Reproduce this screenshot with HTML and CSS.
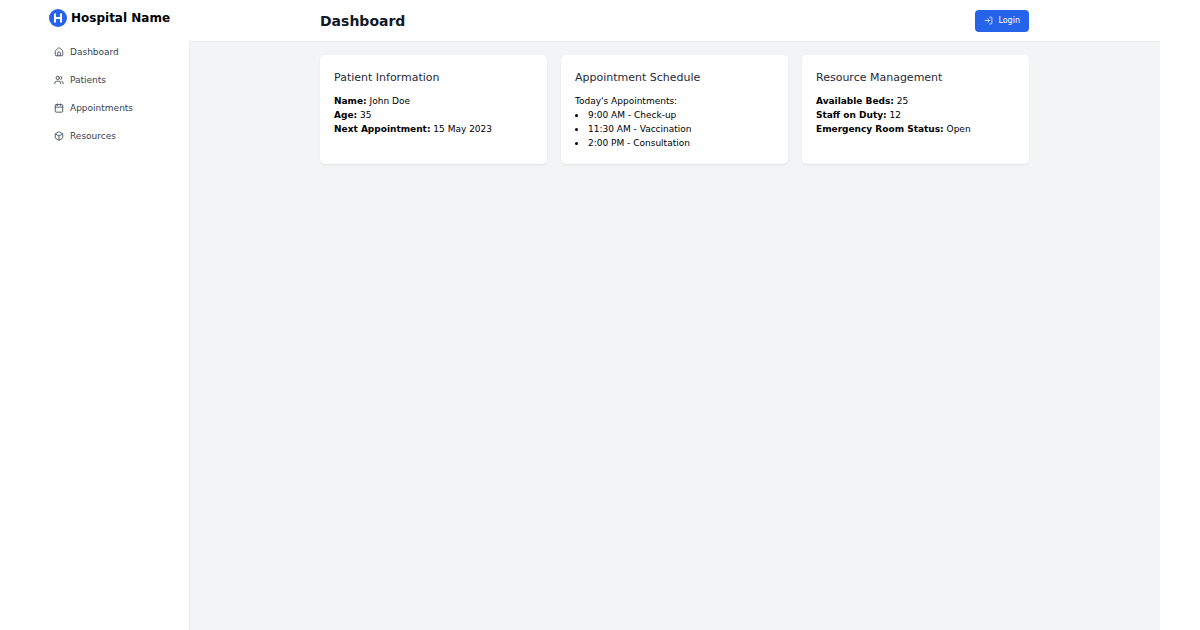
FILE: index.html
```html
<!DOCTYPE html>
<html lang="en">
<head>
    <meta charset="UTF-8">
    <meta name="viewport" content="width=device-width, initial-scale=1.0">
    <title>Hospital Dashboard</title>
    <link rel="stylesheet" href="styles.css">
</head>
<body>

<div class="app">
    <aside class="sidebar">
        <div class="brand">
            <svg class="logo" viewBox="0 0 24 24" aria-hidden="true">
                <circle cx="12" cy="12" r="12" fill="#2563eb"/>
                <path d="M8 6v12M16 6v12M8 12h8" fill="none" stroke="#fff" stroke-width="2.8"/>
            </svg>
            <span class="brand-name">Hospital Name</span>
        </div>
        <nav class="menu">
            <a href="#" class="menu-link">
                <svg class="icon" viewBox="0 0 24 24"><path d="M15 21v-8a1 1 0 0 0-1-1h-4a1 1 0 0 0-1 1v8"/><path d="M3 10a2 2 0 0 1 .709-1.528l7-5.999a2 2 0 0 1 2.582 0l7 5.999A2 2 0 0 1 21 10v9a2 2 0 0 1-2 2H5a2 2 0 0 1-2-2z"/></svg>
                Dashboard
            </a>
            <a href="#" class="menu-link">
                <svg class="icon" viewBox="0 0 24 24"><path d="M16 21v-2a4 4 0 0 0-4-4H6a4 4 0 0 0-4 4v2"/><circle cx="9" cy="7" r="4"/><path d="M22 21v-2a4 4 0 0 0-3-3.87M16 3.13a4 4 0 0 1 0 7.75"/></svg>
                Patients
            </a>
            <a href="#" class="menu-link">
                <svg class="icon" viewBox="0 0 24 24"><path d="M8 2v4M16 2v4M3 10h18"/><rect x="3" y="4" width="18" height="18" rx="2"/></svg>
                Appointments
            </a>
            <a href="#" class="menu-link">
                <svg class="icon" viewBox="0 0 24 24"><path d="M21 8a2 2 0 0 0-1-1.73l-7-4a2 2 0 0 0-2 0l-7 4A2 2 0 0 0 3 8v8a2 2 0 0 0 1 1.73l7 4a2 2 0 0 0 2 0l7-4A2 2 0 0 0 21 16Z"/><path d="m3.3 7 8.7 5 8.7-5M12 22V12"/></svg>
                Resources
            </a>
        </nav>
    </aside>

    <div class="main">
        <header class="header">
            <div class="container header-row">
                <h1 class="title">Dashboard</h1>
                <button type="button" class="login-button">
                    <svg class="icon login-icon" viewBox="0 0 24 24"><path d="M15 3h4a2 2 0 0 1 2 2v14a2 2 0 0 1-2 2h-4M10 17l5-5-5-5M15 12H3"/></svg>
                    Login
                </button>
            </div>
        </header>
        <main class="container cards">
            <section class="card">
                <h2 class="card-title">Patient Information</h2>
                <p><strong>Name:</strong> John Doe</p>
                <p><strong>Age:</strong> 35</p>
                <p><strong>Next Appointment:</strong> 15 May 2023</p>
            </section>
            <section class="card">
                <h2 class="card-title">Appointment Schedule</h2>
                <p>Today's Appointments:</p>
                <ul class="schedule">
                    <li>9:00 AM - Check-up</li>
                    <li>11:30 AM - Vaccination</li>
                    <li>2:00 PM - Consultation</li>
                </ul>
            </section>
            <section class="card">
                <h2 class="card-title">Resource Management</h2>
                <p><strong>Available Beds:</strong> 25</p>
                <p><strong>Staff on Duty:</strong> 12</p>
                <p><strong>Emergency Room Status:</strong> Open</p>
            </section>
        </main>
    </div>
</div>

</body>
</html>
```
FILE: styles.css
```css
* {
    box-sizing: border-box;
    margin: 0;
    padding: 0;
}
body {
    background-color: #fff;
    color: #000;
    font-family: "DejaVu Sans", sans-serif;
    font-size: 9px;
    line-height: 14px;
}
.app {
    display: flex;
    min-height: 100vh;
    margin: 0 40px;
}
.sidebar {
    flex: 0 0 149px;
    padding: 9px;
}
.brand {
    display: flex;
    align-items: center;
    gap: 4px;
    height: 18px;
    margin-bottom: 14px;
}
.logo {
    width: 18px;
    height: 18px;
}
.brand-name {
    font-size: 12px;
    font-weight: bold;
    white-space: nowrap;
}
.menu {
    display: flex;
    flex-direction: column;
    gap: 6px;
}
.menu-link {
    display: flex;
    align-items: center;
    gap: 6px;
    height: 22px;
    padding: 0 5px;
    color: #374151;
    text-decoration: none;
}
.icon {
    width: 10px;
    height: 10px;
    fill: none;
    stroke: currentColor;
    stroke-width: 2;
    stroke-linecap: round;
    stroke-linejoin: round;
}
.main {
    flex: 1;
    background-color: #f3f4f6;
    box-shadow: inset 1px 0 1px rgba(0, 0, 0, 0.03);
}
.header {
    background-color: #fff;
    box-shadow: 0 1px 1px rgba(0, 0, 0, 0.04);
}
.container {
    max-width: 747px;
    margin: 0 auto;
    padding: 0 19px;
}
.header-row {
    display: flex;
    justify-content: space-between;
    align-items: center;
    height: 41px;
}
.title {
    color: #111827;
    font-size: 14px;
    line-height: 16px;
}
.login-button {
    display: flex;
    align-items: center;
    gap: 5px;
    height: 22px;
    padding: 0 9px;
    border: none;
    border-radius: 4px;
    background-color: #2563eb;
    color: #fff;
    font-family: inherit;
    font-size: 8px;
    cursor: pointer;
}
.login-icon {
    width: 9px;
    height: 9px;
}
.cards {
    display: grid;
    grid-template-columns: repeat(3, 1fr);
    gap: 14px;
    padding-top: 14px;
}
.card {
    padding: 14px;
    border-radius: 5px;
    background-color: #fff;
    box-shadow: 0 1px 2px rgba(0, 0, 0, 0.08);
}
.card-title {
    margin-bottom: 7px;
    color: #1f2937;
    font-size: 11px;
    font-weight: normal;
    line-height: 18px;
}
.schedule {
    list-style-position: inside;
}
```
